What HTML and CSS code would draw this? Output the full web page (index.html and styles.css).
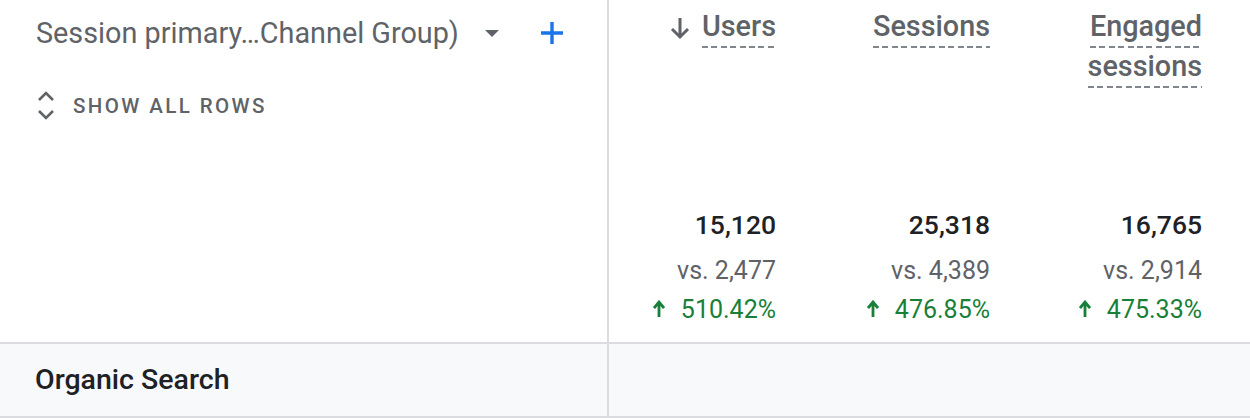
FILE: index.html
```html
<!DOCTYPE html>
<html>
<head>
<meta charset="utf-8">
<link rel="stylesheet" href="styles.css">
</head>
<body>
<div class="table">
  <div class="head-row">
    <div class="dim-cell">
      <div class="dim-title">
        <span class="dim-name">Session primary…Channel Group)</span>
        <svg class="caret" width="14" height="8" viewBox="0 0 14 8"><path d="M0 0h14L7 7z" fill="#5f6368"/></svg>
        <svg class="plus" width="24" height="24" viewBox="0 0 24 24"><path d="M12 1v22M1 12h22" stroke="#1a73e8" stroke-width="3.4" fill="none"/></svg>
      </div>
      <div class="show-all">
        <svg class="chev" width="20" height="30" viewBox="0 0 20 30"><path d="M3 9l7-7 7 7M3 20l7 7 7-7" stroke="#5f6368" stroke-width="2.6" fill="none"/></svg>
        <span>SHOW ALL ROWS</span>
      </div>
    </div>
    <div class="metric-cell c1">
      <div class="metric-head">
        <svg class="sort" width="20" height="24" viewBox="0 0 20 24"><path d="M10 2v19M2 13l8 8 8-8" stroke="#5f6368" stroke-width="3" fill="none"/></svg>
        <div class="mh-text"><span class="ul">Users</span></div>
      </div>
      <div class="values">
        <div class="val">15,120</div>
        <div class="vs">vs. 2,477</div>
        <div class="chg"><svg width="12" height="18" viewBox="0 0 12 18"><path d="M6 17V3M1 8l5-6 5 6" stroke="#188038" stroke-width="2.8" fill="none"/></svg>510.42%</div>
      </div>
    </div>
    <div class="metric-cell c2">
      <div class="metric-head">
        <div class="mh-text"><span class="ul">Sessions</span></div>
      </div>
      <div class="values">
        <div class="val">25,318</div>
        <div class="vs">vs. 4,389</div>
        <div class="chg"><svg width="12" height="18" viewBox="0 0 12 18"><path d="M6 17V3M1 8l5-6 5 6" stroke="#188038" stroke-width="2.8" fill="none"/></svg>476.85%</div>
      </div>
    </div>
    <div class="metric-cell c3">
      <div class="metric-head">
        <div class="mh-text"><span class="ul">Engaged</span><span class="ul">sessions</span></div>
      </div>
      <div class="values">
        <div class="val">16,765</div>
        <div class="vs">vs. 2,914</div>
        <div class="chg"><svg width="12" height="18" viewBox="0 0 12 18"><path d="M6 17V3M1 8l5-6 5 6" stroke="#188038" stroke-width="2.8" fill="none"/></svg>475.33%</div>
      </div>
    </div>
  </div>
  <div class="data-row">
    <div class="dim-cell row-dim">Organic Search</div>
    <div class="row-rest"></div>
  </div>
</div>
</body>
</html>
```
FILE: styles.css
```css
html, body {
  margin: 0;
  padding: 0;
  background: #fff;
}
body {
  font-family: Roboto, "Liberation Sans", Arial, sans-serif;
  color: #5f6368;
  width: 1250px;
  height: 418px;
  overflow: hidden;
}
.table {
  display: flex;
  flex-direction: column;
}
.head-row {
  display: flex;
  height: 342px;
  border-bottom: 2px solid #dadce0;
}
.dim-cell {
  width: 571px;
  padding-left: 36px;
  border-right: 2px solid #dadce0;
  flex: none;
}
.dim-title {
  display: flex;
  align-items: center;
  height: 32px;
  margin-top: 17px;
}
.dim-name {
  font-size: 28.8px;
  line-height: 32px;
  color: #5f6368;
}
.caret {
  margin-left: 26px;
  margin-top: 2px;
}
.plus {
  margin-left: 41px;
}
.show-all {
  display: flex;
  align-items: center;
  margin-top: 42px;
  height: 30px;
}
.show-all span {
  margin-left: 17px;
  font-size: 20.5px;
  font-weight: 500;
  letter-spacing: 2.4px;
  color: #5f6368;
}
.metric-cell {
  flex: none;
  display: flex;
  flex-direction: column;
  align-items: flex-end;
  padding-right: 48px;
  box-sizing: border-box;
}
.c1 { width: 215px; }
.c2 { width: 214px; }
.c3 { width: 212px; }
.metric-head {
  display: flex;
  align-items: flex-start;
  height: 207px;
}
.sort {
  margin-top: 16px;
  margin-right: 12px;
}
.mh-text {
  display: flex;
  flex-direction: column;
  align-items: flex-end;
  margin-top: 10px;
  font-size: 28.8px;
  font-weight: 500;
  color: #5f6368;
}
.ul {
  display: block;
  line-height: 32px;
  padding-bottom: 6px;
  margin-bottom: 2px;
  background-image: repeating-linear-gradient(to right, #80868b 0 6px, transparent 6px 9.4px);
  background-size: 100% 2px;
  background-position: left bottom;
  background-repeat: no-repeat;
}
.values {
  text-align: right;
}
.val {
  font-size: 26.5px;
  line-height: 36px;
  font-weight: 500;
  color: #202124;
}
.vs {
  font-size: 25px;
  line-height: 36px;
  margin-top: 10px;
  color: #5f6368;
}
.chg {
  font-size: 25px;
  line-height: 36px;
  margin-top: 3px;
  color: #188038;
  display: flex;
  align-items: center;
  justify-content: flex-end;
}
.chg svg {
  margin-right: 16px;
  margin-top: -2px;
}
.data-row {
  display: flex;
  height: 72px;
  background: #f8f9fa;
  border-bottom: 2px solid #dadce0;
}
.row-dim {
  display: flex;
  align-items: center;
  font-size: 28.5px;
  font-weight: 500;
  color: #202124;
  padding-left: 35px;
  width: 572px;
  padding-bottom: 2px;
  box-sizing: content-box;
}
.row-rest {
  flex: 1;
}
```
